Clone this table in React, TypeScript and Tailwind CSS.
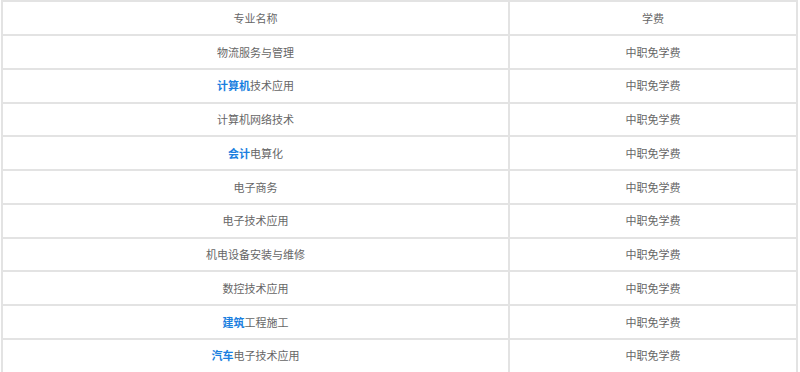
import React from 'react';

const rows: Array<{ hl?: string; rest: string }> = [
  { rest: '物流服务与管理' },
  { hl: '计算机', rest: '技术应用' },
  { rest: '计算机网络技术' },
  { hl: '会计', rest: '电算化' },
  { rest: '电子商务' },
  { rest: '电子技术应用' },
  { rest: '机电设备安装与维修' },
  { rest: '数控技术应用' },
  { hl: '建筑', rest: '工程施工' },
  { hl: '汽车', rest: '电子技术应用' },
];

export default function App() {
  return (
    <div className="w-[800px] h-[372px] overflow-hidden bg-white pl-[1px] font-['Microsoft_YaHei','Noto_Sans_CJK_SC',sans-serif] text-[11px] text-[#666]">
      <div className="w-[797px] border-2 border-[#e3e3e3]">
        {/* header */}
        <div className="grid grid-cols-[507px_1fr] h-[34px] border-b-2 border-[#e3e3e3]">
          <div className="flex items-center justify-center border-r-2 border-[#e3e3e3]">专业名称</div>
          <div className="flex items-center justify-center">学费</div>
        </div>
        {rows.map((r, i) => (
          <div key={i} className="grid grid-cols-[507px_1fr] h-[33.75px] border-b-2 border-[#e3e3e3]">
            <div className="flex items-center justify-center border-r-2 border-[#e3e3e3]">
              {r.hl && <span className="font-bold text-[#1a7fe0]">{r.hl}</span>}
              <span>{r.rest}</span>
            </div>
            <div className="flex items-center justify-center">中职免学费</div>
          </div>
        ))}
      </div>
    </div>
  );
}
